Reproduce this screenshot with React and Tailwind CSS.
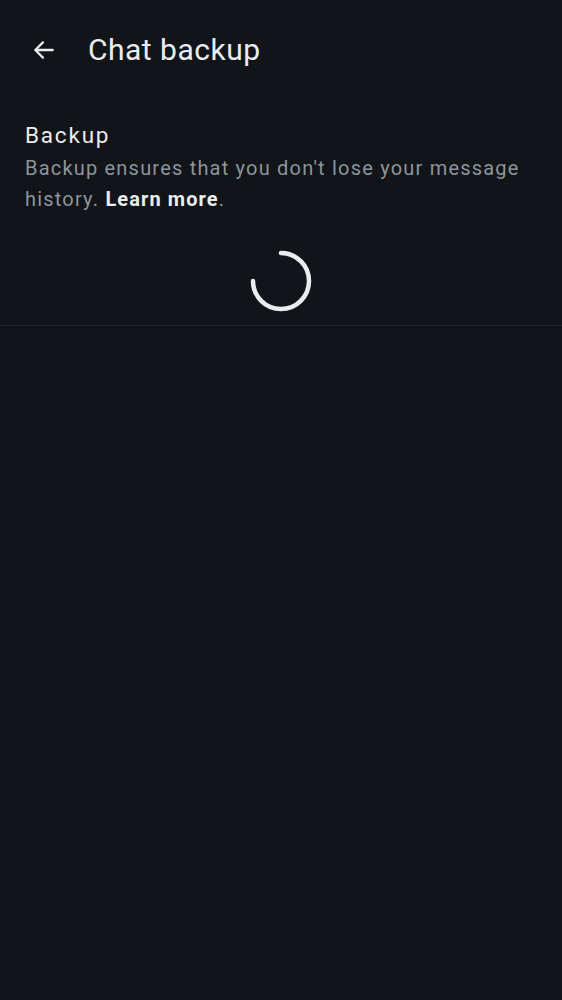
import React from 'react';

function Spinner() {
  return (
    <svg width="64" height="64" viewBox="0 0 64 64" className="block">
      <path
        d="M32 4 A28 28 0 1 1 4 32"
        fill="none"
        stroke="#e9edef"
        strokeWidth="4.5"
        strokeLinecap="round"
      />
    </svg>
  );
}

export default function App() {
  return (
    <div
      className="min-h-[1000px] w-full bg-[#111418] text-[#e9edef]"
      style={{ fontFamily: 'Roboto, "Noto Sans", sans-serif' }}
    >
      <header className="flex h-[100px] items-center pl-[30px]">
        <button className="flex h-[28px] w-[28px] items-center justify-center">
          <svg width="26" height="26" viewBox="0 0 24 24" fill="none" stroke="#e9edef" strokeWidth="2.1" strokeLinecap="round" strokeLinejoin="round">
            <path d="M20 12H4.5" />
            <path d="M11 5l-7 7 7 7" />
          </svg>
        </button>
        <h1 className="ml-[30px] text-[30px] leading-none tracking-[0.5px] text-[#e9edef]">Chat backup</h1>
      </header>

      <section className="border-b border-[#23272b] px-[25px] pt-[20px]">
        <h2 className="text-[22.5px] leading-[30px] tracking-[1.8px] text-[#e9edef]">Backup</h2>
        <p className="mt-[3px] text-[20px] leading-[31px] tracking-[1.2px] text-[#8c959c]">
          Backup ensures that you don't lose your message history.{' '}
          <span className="font-bold tracking-[1.1px] text-[#e9edef]">Learn more</span>.
        </p>
        <div className="flex justify-center pb-[12px] pt-[34px]">
          <Spinner />
        </div>
      </section>
    </div>
  );
}
